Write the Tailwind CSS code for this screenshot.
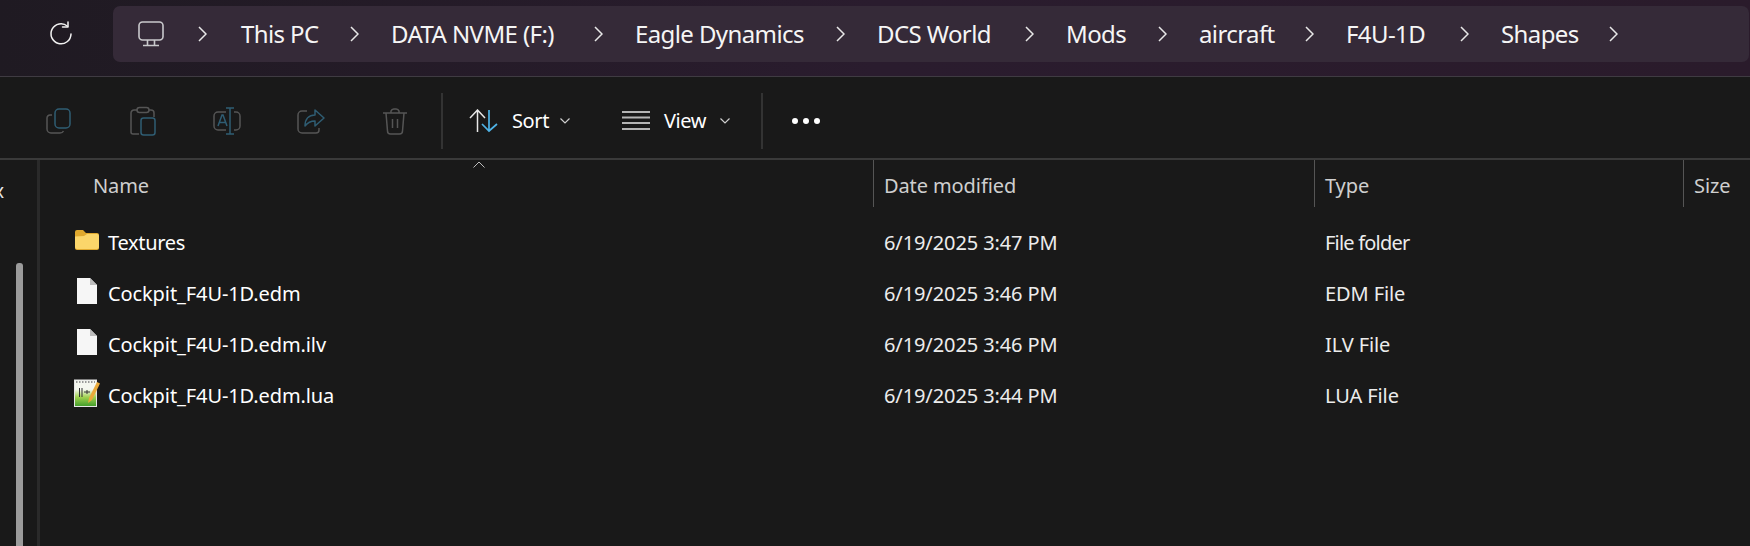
<!DOCTYPE html>
<html lang="en">
<head>
  <meta charset="UTF-8" />
  <title>Shapes - File Explorer</title>
  <script src="https://cdn.jsdelivr.net/npm/@tailwindcss/browser@4"></script>
</head>
<body class="w-[1750px] h-[546px] overflow-hidden bg-[#191919] font-['Noto_Sans',sans-serif] text-white">
  <!-- address bar -->
  <div class="h-[77px] pt-[6px] flex bg-gradient-to-r from-[#1f1a22] via-[#2a1c2e] to-[#2a1b2b] border-b border-[#3f3b42]">
    <div class="w-[113px] h-[56px] flex items-center justify-center">
      <svg class="w-[26px] h-[26px] ml-[9px]" viewBox="0 0 26 26" fill="none" stroke="#f2f2f2" stroke-width="1.5"><path d="M19.5 5.2A10 10 0 1 0 23 13" stroke-linecap="round"/><path d="M20 1v5h-5.5" stroke-linejoin="round" stroke-linecap="round"/></svg>
    </div>
    <div class="w-[1636px] h-[56px] rounded-[7px] bg-[#352a38] flex items-center gap-[32px] pl-[25px] text-[24px] text-[#f5f5f5] tracking-[-0.6px]">
      <svg class="w-[26px] h-[26px] mr-[2px]" viewBox="0 0 26 26" fill="none" stroke="#c9c9cc" stroke-width="1.6"><rect x="1" y="1" width="24" height="18" rx="3.5"/><path d="M9.5 19v5M16.5 19v5M5 24.5h16" /></svg>
      <svg class="w-[9px] h-[16px] mr-[2px]" viewBox="0 0 9 16" fill="none" stroke="#e8e8e8" stroke-width="1.5"><path d="M1 1l7 7-7 7"/></svg>
      <span class="w-[77px] whitespace-nowrap">This PC</span>
      <svg class="w-[9px] h-[16px]" viewBox="0 0 9 16" fill="none" stroke="#e8e8e8" stroke-width="1.5"><path d="M1 1l7 7-7 7"/></svg>
      <span class="w-[171px] whitespace-nowrap">DATA NVME (F:)</span>
      <svg class="w-[9px] h-[16px]" viewBox="0 0 9 16" fill="none" stroke="#e8e8e8" stroke-width="1.5"><path d="M1 1l7 7-7 7"/></svg>
      <span class="w-[169px] whitespace-nowrap">Eagle Dynamics</span>
      <svg class="w-[9px] h-[16px]" viewBox="0 0 9 16" fill="none" stroke="#e8e8e8" stroke-width="1.5"><path d="M1 1l7 7-7 7"/></svg>
      <span class="w-[116px] whitespace-nowrap">DCS World</span>
      <svg class="w-[9px] h-[16px]" viewBox="0 0 9 16" fill="none" stroke="#e8e8e8" stroke-width="1.5"><path d="M1 1l7 7-7 7"/></svg>
      <span class="w-[60px] whitespace-nowrap">Mods</span>
      <svg class="w-[9px] h-[16px]" viewBox="0 0 9 16" fill="none" stroke="#e8e8e8" stroke-width="1.5"><path d="M1 1l7 7-7 7"/></svg>
      <span class="w-[74px] whitespace-nowrap">aircraft</span>
      <svg class="w-[9px] h-[16px]" viewBox="0 0 9 16" fill="none" stroke="#e8e8e8" stroke-width="1.5"><path d="M1 1l7 7-7 7"/></svg>
      <span class="w-[82px] whitespace-nowrap">F4U-1D</span>
      <svg class="w-[9px] h-[16px]" viewBox="0 0 9 16" fill="none" stroke="#e8e8e8" stroke-width="1.5"><path d="M1 1l7 7-7 7"/></svg>
      <span class="w-[76px] whitespace-nowrap">Shapes</span>
      <svg class="w-[9px] h-[16px]" viewBox="0 0 9 16" fill="none" stroke="#e8e8e8" stroke-width="1.5"><path d="M1 1l7 7-7 7"/></svg>
    </div>
  </div>

  <!-- command bar -->
  <div class="h-[83px] pt-[6px] border-b-2 border-[#3a3a3a] flex items-center pl-[17px]">
    <div class="w-[84px] flex justify-center">
      <svg class="w-[26px] h-[28px]" viewBox="0 0 26 28" fill="none" stroke-width="1.5"><path d="M6 8H4a3 3 0 0 0-3 3v11a4 4 0 0 0 4 4h9c2 0 3-1 3.5-2" stroke="#555"/><rect x="9" y="2" width="15" height="19" rx="4" stroke="#2f5d73"/></svg>
    </div>
    <div class="w-[84px] flex justify-center">
      <svg class="w-[26px] h-[30px]" viewBox="0 0 26 30" fill="none" stroke-width="1.5"><path d="M7 4H4a3 3 0 0 0-3 3v19a2 2 0 0 0 2 2h6M19 4h2a3 3 0 0 1 3 3v4" stroke="#555"/><rect x="7" y="1.5" width="12" height="5" rx="2.5" stroke="#555"/><rect x="11" y="12" width="14" height="17" rx="2.5" stroke="#2f5d73"/></svg>
    </div>
    <div class="w-[84px] flex justify-center">
      <svg class="w-[28px] h-[30px]" viewBox="0 0 28 30" fill="none" stroke-width="1.5"><path d="M13 6H5a4 4 0 0 0-4 4v10a4 4 0 0 0 4 4h8M21 6h2a4 4 0 0 1 4 4v10a4 4 0 0 1-4 4h-2" stroke="#555"/><path d="M17 2v26M13 2h8M13 28h8" stroke="#2f5d73"/><path d="M5 20l4-11h1l4 11M6.5 16.5h6" stroke="#2f5d73"/></svg>
    </div>
    <div class="w-[84px] flex justify-center">
      <svg class="w-[28px] h-[26px]" viewBox="0 0 28 26" fill="none" stroke-width="1.5"><path d="M10 3H5a4 4 0 0 0-4 4v14a4 4 0 0 0 4 4h14a3 3 0 0 0 3-3v-2" stroke="#555"/><path d="M18 2l9 8-9 8v-5c-4 0-7 1-10 5 0-7 4-11 10-11z" stroke="#2f5d73" stroke-linejoin="round"/></svg>
    </div>
    <div class="w-[84px] flex justify-center">
      <svg class="w-[26px] h-[28px]" viewBox="0 0 26 28" fill="none" stroke="#555" stroke-width="1.5"><path d="M1 6h24M9 6V4a3 3 0 0 1 3-2h2a3 3 0 0 1 3 2v2M4 6l1.500 18a3 3 0 0 0 3 3h9a3 3 0 0 0 3-3L22 6M10.500 12v9M15.500 12v9"/></svg>
    </div>
    <div class="ml-[4px] w-[2px] h-[56px] bg-[#333]"></div>
    <div class="ml-[26px] flex items-center text-[20px] tracking-[-0.4px]">
      <svg class="w-[29px] h-[24px]" viewBox="0 0 29 24" fill="none" stroke-width="1.5"><path d="M8.500 23V2M1 9l7.500-8L16 9" stroke="#e8e8e8"/><path d="M20 1v21M13 15l7 7 8-7" stroke="#4fb3e6" stroke-width="1.7"/></svg>
      <span class="ml-[14px] w-[38px]">Sort</span>
      <svg class="ml-[10px] w-[10px] h-[6px]" viewBox="0 0 10 6" fill="none" stroke="#cfcfcf" stroke-width="1.200"><path d="M.5.500L5 5 9.500.500"/></svg>
    </div>
    <div class="ml-[52px] flex items-center text-[20px] tracking-[-0.4px]">
      <svg class="w-[28px] h-[19px]" viewBox="0 0 28 19" fill="none" stroke="#b5b5b5" stroke-width="2"><path d="M0 1h28M0 6.500h28M0 12h28M0 18h28"/></svg>
      <span class="ml-[14px] w-[44px]">View</span>
      <svg class="ml-[12px] w-[10px] h-[6px]" viewBox="0 0 10 6" fill="none" stroke="#cfcfcf" stroke-width="1.200"><path d="M.5.500L5 5 9.500.500"/></svg>
    </div>
    <div class="ml-[31px] w-[2px] h-[56px] bg-[#333]"></div>
    <div class="ml-[29px] flex gap-[5px]">
      <span class="w-[6px] h-[6px] rounded-full bg-white"></span>
      <span class="w-[6px] h-[6px] rounded-full bg-white"></span>
      <span class="w-[6px] h-[6px] rounded-full bg-white"></span>
    </div>
  </div>

  <div class="flex h-[386px]">
    <!-- nav pane, cut off at the left edge -->
    <div class="w-[37px] overflow-hidden pt-[20px] shrink-0">
      <div class="h-[22px] -ml-[6px] text-[19px] leading-[22px] text-[#e8e8e8]">x</div>
      <div class="ml-[16px] mt-[61px] w-[7px] h-[300px] rounded-t-[3px] bg-[#9b9b9b]"></div>
    </div>
    <div class="w-[3px] bg-[#2a2a2a] shrink-0"></div>

    <!-- file list -->
    <div class="flex-1 relative text-[20px] tracking-[-0.1px] text-[#ececec]">
      <svg class="absolute left-[433px] top-[1px] w-[12px] h-[7px]" viewBox="0 0 12 7" fill="none" stroke="#bdbdbd" stroke-width="1"><path d="M.5 6.500L6 1l5.500 5.500"/></svg>
      <div class="grid grid-cols-[833px_441px_369px_1fr] h-[47px] text-[#cfcfcf] mb-[10px]">
        <div class="pl-[53px] flex items-center pt-[4px]">Name</div>
        <div class="border-l border-[#555] pl-[10px] flex items-center pt-[4px]">Date modified</div>
        <div class="border-l border-[#555] pl-[10px] flex items-center pt-[4px]">Type</div>
        <div class="border-l border-[#555] pl-[10px] flex items-center pt-[4px]">Size</div>
      </div>

      <div class="grid grid-cols-[833px_441px_369px_1fr] h-[51px] items-center">
        <div class="pl-[34px] flex items-center">
          <svg class="w-[26px] h-[21px] -mt-[7px]" viewBox="0 0 26 21" ><path d="M1 3a2 2 0 0 1 2-2h6l3 3h11a2 2 0 0 1 2 2v13a2 2 0 0 1-2 2H3a2 2 0 0 1-2-2z" fill="#e0a92e"/><path d="M1 7.500l9-.5 3-2h10a2 2 0 0 1 2 2v11a2 2 0 0 1-2 2H3a2 2 0 0 1-2-2z" fill="#fbd66a"/></svg>
          <span class="ml-[8px] text-white tracking-[-0.3px]">Textures</span>
        </div>
        <div class="pl-[11px]">6/19/2025 3:47 PM</div>
        <div class="pl-[11px] tracking-[-0.8px]">File folder</div>
        <div></div>
      </div>
      <div class="grid grid-cols-[833px_441px_369px_1fr] h-[51px] items-center">
        <div class="pl-[37px] flex items-center">
          <svg class="w-[20px] h-[26px] -mt-[6px]" viewBox="0 0 20 26"><path d="M0 0h13l7 7v19H0z" fill="#f6f6f6"/><path d="M13 0v7h7z" fill="#bdbdbd"/></svg>
          <span class="ml-[11px] text-white">Cockpit_F4U-1D.edm</span>
        </div>
        <div class="pl-[11px]">6/19/2025 3:46 PM</div>
        <div class="pl-[11px]">EDM File</div>
        <div></div>
      </div>
      <div class="grid grid-cols-[833px_441px_369px_1fr] h-[51px] items-center">
        <div class="pl-[37px] flex items-center">
          <svg class="w-[20px] h-[26px] -mt-[6px]" viewBox="0 0 20 26"><path d="M0 0h13l7 7v19H0z" fill="#f6f6f6"/><path d="M13 0v7h7z" fill="#bdbdbd"/></svg>
          <span class="ml-[11px] text-white">Cockpit_F4U-1D.edm.ilv</span>
        </div>
        <div class="pl-[11px]">6/19/2025 3:46 PM</div>
        <div class="pl-[11px]">ILV File</div>
        <div></div>
      </div>
      <div class="grid grid-cols-[833px_441px_369px_1fr] h-[51px] items-center">
        <div class="pl-[34px] flex items-center">
          <svg class="w-[26px] h-[28px] -mt-[6px]" viewBox="0 0 26 28">
            <defs><linearGradient id="lua" x1="0" y1="0" x2="0" y2="1"><stop offset="0.35" stop-color="#f5f7ef"/><stop offset="0.65" stop-color="#9fd14e"/><stop offset="1" stop-color="#3f9a2a"/></linearGradient></defs>
            <rect x="0.500" y="1" width="22" height="26.500" fill="url(#lua)" stroke="#e6e6e6"/>
            <path d="M2 3h19" stroke="#9a9a9a" stroke-width="2" stroke-dasharray="1.500 1.500"/>
            <path d="M5.500 9v9M8 9v9" stroke="#333" stroke-width="1"/>
            <path d="M10 13h6M13 11v4" stroke="#333" stroke-width="1"/>
            <path d="M14 24l1-5L23 3l3 1.500L18 21z" fill="#e9a93a"/>
          </svg>
          <span class="ml-[8px] text-white">Cockpit_F4U-1D.edm.lua</span>
        </div>
        <div class="pl-[11px]">6/19/2025 3:44 PM</div>
        <div class="pl-[11px]">LUA File</div>
        <div></div>
      </div>
    </div>
  </div>
</body>
</html>
